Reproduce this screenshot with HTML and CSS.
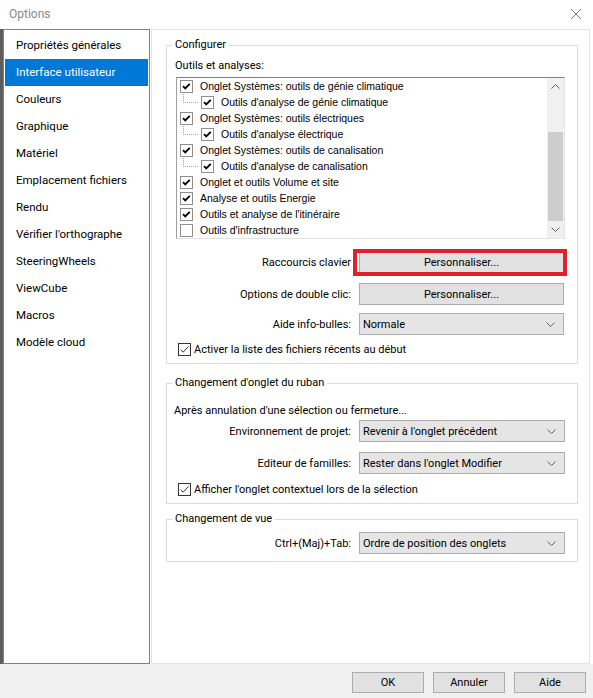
FILE: index.html
```html
<!DOCTYPE html>
<html lang="fr">
<head>
    <meta charset="UTF-8">
    <title>Options</title>
    <link rel="stylesheet" href="styles.css">
</head>
<body>
    <svg class="defs" width="0" height="0">
        <symbol id="tick-classic" viewBox="0 0 13 13">
            <rect x="0.5" y="0.5" width="12" height="12" fill="#fff" stroke="#8e8f8f"/>
            <path d="M3 6.2 L5.2 8.4 L9.8 3.8" fill="none" stroke="#000" stroke-width="1.8"/>
        </symbol>
        <symbol id="box-classic" viewBox="0 0 13 13">
            <rect x="0.5" y="0.5" width="12" height="12" fill="#fff" stroke="#8e8f8f"/>
        </symbol>
        <symbol id="tick-flat" viewBox="0 0 13 13">
            <rect x="0.5" y="0.5" width="12" height="12" fill="#fff" stroke="#333"/>
            <path d="M2.6 6.6 L5.2 9.2 L10.6 3.4" fill="none" stroke="#333" stroke-width="1"/>
        </symbol>
        <symbol id="chevron" viewBox="0 0 9 5">
            <path d="M0.5 0.5 L4.5 4.5 L8.5 0.5" fill="none" stroke="#606060" stroke-width="1"/>
        </symbol>
        <symbol id="tree-line" viewBox="0 0 18 16">
            <path d="M1.5 0 V8.5 H17" fill="none" stroke="#a0a0a0" stroke-width="1" stroke-dasharray="1 1"/>
        </symbol>
    </svg>

    <div class="titlebar">
        <span class="title">Options</span>
        <svg class="close" width="12" height="12" viewBox="0 0 12 12">
            <path d="M1 1 L11 11 M11 1 L1 11" stroke="#7a7a7a" stroke-width="1"/>
        </svg>
    </div>

    <div class="main">
        <ul class="nav">
            <li>Propriétés générales</li>
            <li class="active">Interface utilisateur</li>
            <li>Couleurs</li>
            <li>Graphique</li>
            <li>Matériel</li>
            <li>Emplacement fichiers</li>
            <li>Rendu</li>
            <li>Vérifier l'orthographe</li>
            <li>SteeringWheels</li>
            <li>ViewCube</li>
            <li>Macros</li>
            <li>Modèle cloud</li>
        </ul>

        <div class="page">
            <fieldset class="group group-config">
                <legend>Configurer</legend>
                <div class="caption">Outils et analyses:</div>
                <div class="listbox">
                    <div class="rows">
                        <div class="row"><svg class="cb"><use href="#tick-classic"/></svg>Onglet Systèmes: outils de génie climatique</div>
                        <div class="row child"><svg class="tree"><use href="#tree-line"/></svg><svg class="cb"><use href="#tick-classic"/></svg>Outils d'analyse de génie climatique</div>
                        <div class="row"><svg class="cb"><use href="#tick-classic"/></svg>Onglet Systèmes: outils électriques</div>
                        <div class="row child"><svg class="tree"><use href="#tree-line"/></svg><svg class="cb"><use href="#tick-classic"/></svg>Outils d'analyse électrique</div>
                        <div class="row"><svg class="cb"><use href="#tick-classic"/></svg>Onglet Systèmes: outils de canalisation</div>
                        <div class="row child"><svg class="tree"><use href="#tree-line"/></svg><svg class="cb"><use href="#tick-classic"/></svg>Outils d'analyse de canalisation</div>
                        <div class="row"><svg class="cb"><use href="#tick-classic"/></svg>Onglet et outils Volume et site</div>
                        <div class="row"><svg class="cb"><use href="#tick-classic"/></svg>Analyse et outils Energie</div>
                        <div class="row"><svg class="cb"><use href="#tick-classic"/></svg>Outils et analyse de l'itinéraire</div>
                        <div class="row"><svg class="cb"><use href="#box-classic"/></svg>Outils d'infrastructure</div>
                    </div>
                    <div class="scrollbar">
                        <div class="arrow"><svg width="9" height="5" class="up"><use href="#chevron"/></svg></div>
                        <div class="track"><div class="thumb"></div></div>
                        <div class="arrow"><svg width="9" height="5"><use href="#chevron"/></svg></div>
                    </div>
                </div>

                <div class="form-row first">
                    <span class="label">Raccourcis clavier</span>
                    <button class="btn highlighted">Personnaliser...</button>
                </div>
                <div class="form-row second">
                    <span class="label">Options de double clic:</span>
                    <button class="btn">Personnaliser...</button>
                </div>
                <div class="form-row third">
                    <span class="label">Aide info-bulles:</span>
                    <div class="combo">Normale<svg width="9" height="5"><use href="#chevron"/></svg></div>
                </div>
                <div class="check-row">
                    <svg class="cb"><use href="#tick-flat"/></svg>Activer la liste des fichiers récents au début
                </div>
            </fieldset>

            <fieldset class="group group-ribbon">
                <legend>Changement d'onglet du ruban</legend>
                <div class="note">Après annulation d'une sélection ou fermeture...</div>
                <div class="form-row env">
                    <span class="label">Environnement de projet:</span>
                    <div class="combo">Revenir à l'onglet précédent<svg width="9" height="5"><use href="#chevron"/></svg></div>
                </div>
                <div class="form-row fam">
                    <span class="label">Editeur de familles:</span>
                    <div class="combo">Rester dans l'onglet Modifier<svg width="9" height="5"><use href="#chevron"/></svg></div>
                </div>
                <div class="check-row">
                    <svg class="cb"><use href="#tick-flat"/></svg>Afficher l'onglet contextuel lors de la sélection
                </div>
            </fieldset>

            <fieldset class="group group-view">
                <legend>Changement de vue</legend>
                <div class="form-row view">
                    <span class="label">Ctrl+(Maj)+Tab:</span>
                    <div class="combo">Ordre de position des onglets<svg width="9" height="5"><use href="#chevron"/></svg></div>
                </div>
            </fieldset>
        </div>
    </div>

    <div class="footer">
        <button class="btn small">OK</button>
        <button class="btn small">Annuler</button>
        <button class="btn small">Aide</button>
    </div>
</body>
</html>
```

FILE: styles.css
```css
* {
    box-sizing: border-box;
}

body {
    margin: 0;
    width: 593px;
    height: 698px;
    overflow: hidden;
    background: #f0f0f0;
    font-family: Roboto, "Noto Sans", sans-serif;
    font-size: 11px;
    color: #000;
}

.defs {
    position: absolute;
}

.titlebar {
    height: 29px;
    background: #fff;
    display: flex;
    align-items: center;
    justify-content: space-between;
    padding: 0 11px 2px 9px;
}

.title {
    color: #8a8a8a;
    font-size: 12px;
}

/* main area: list on the left, page on the right */
.main {
    height: 635px;
    display: flex;
    background: #fff;
    border-left: 3px solid #5d5d5d;
    padding-right: 3px;
}

.nav {
    list-style: none;
    margin: 0;
    padding: 2px 0 0;
    width: 149px;
    border: 1px solid #828282;
    background: #fff;
    font-size: 11.5px;
}

.nav li {
    height: 27px;
    line-height: 27px;
    margin: 0 1px;
    padding-left: 11px;
    white-space: nowrap;
}

.nav li.active {
    background: #0078d7;
    color: #fff;
}

.page {
    flex: 1;
    margin-left: 1px;
    border: 1px solid #e3e3e3;
    padding: 7px 11px 0 14px;
}

/* group boxes */
.group {
    margin: 0;
    padding: 0 12px 6px 0;
    border: 1px solid #dcdcdc;
    min-width: 0;
}

.group legend {
    margin-left: 5px;
    padding: 0 3px;
    line-height: 16px;
}

.group-ribbon {
    margin-top: 11px;
}

.group-view {
    margin-top: 7px;
    padding-bottom: 7px;
}

.caption {
    margin: 5px 0 0 8px;
    line-height: 16px;
}

/* tools list */
.listbox {
    margin: 3px 0 0 9px;
    height: 162px;
    display: flex;
    border: 1px solid;
    border-color: #828282 #e3e3e3 #e3e3e3 #a0a0a0;
    font-family: "Liberation Sans", Arial, sans-serif;
    font-size: 10.5px;
}

.rows {
    flex: 1;
    overflow: hidden;
}

.row {
    height: 16px;
    display: flex;
    align-items: center;
    padding-left: 3px;
    white-space: nowrap;
}

.row .cb {
    width: 13px;
    height: 13px;
    margin-right: 7px;
}

.row.child {
    padding-left: 5px;
}

.tree {
    width: 18px;
    height: 16px;
    margin-right: 1px;
    flex: none;
}

.scrollbar {
    width: 17px;
    display: flex;
    flex-direction: column;
    background: #f0f0f0;
}

.arrow {
    height: 17px;
    display: flex;
    align-items: center;
    justify-content: center;
}

.arrow .up {
    transform: rotate(180deg);
}

.track {
    flex: 1;
    padding-top: 37px;
}

.thumb {
    height: 89px;
    margin: 0 1px;
    background: #cdcdcd;
}

/* label + control rows */
.form-row {
    display: grid;
    grid-template-columns: 184px 205px;
    column-gap: 8px;
    align-items: center;
}

.form-row.first {
    margin-top: 12px;
}

.form-row.second {
    margin-top: 10px;
}

.form-row.third {
    margin-top: 8px;
}

.form-row.env {
    margin-top: 1px;
    grid-template-columns: 184px 206px;
}

.form-row.fam {
    margin-top: 10px;
    grid-template-columns: 184px 206px;
}

.form-row.view {
    margin-top: 5px;
    grid-template-columns: 184px 206px;
}

.label {
    text-align: right;
    white-space: nowrap;
}

.btn {
    height: 22px;
    font-family: inherit;
    font-size: inherit;
    color: #000;
    background: #e1e1e1;
    border: 1px solid #adadad;
    padding: 0;
}

.highlighted {
    position: relative;
}

.highlighted::after {
    content: "";
    position: absolute;
    left: -7px;
    right: -4px;
    top: -3px;
    bottom: -4px;
    border: 4px solid #e0202b;
}

.combo {
    height: 22px;
    display: flex;
    align-items: center;
    justify-content: space-between;
    padding: 0 8px 0 3px;
    background: #e5e5e5;
    border: 1px solid #acacac;
    white-space: nowrap;
}

.check-row {
    display: flex;
    align-items: center;
    height: 16px;
    margin: 6px 0 0 11px;
    white-space: nowrap;
}

.check-row .cb {
    width: 13px;
    height: 13px;
    margin-right: 3px;
}

.group-ribbon .check-row {
    margin-top: 7px;
}

.note {
    margin: 12px 0 0 7px;
    line-height: 16px;
}

.footer {
    height: 34px;
    display: flex;
    justify-content: flex-end;
    gap: 9px;
    padding: 8px 7px 0 0;
}

.btn.small {
    width: 72px;
    height: 21px;
}
```
